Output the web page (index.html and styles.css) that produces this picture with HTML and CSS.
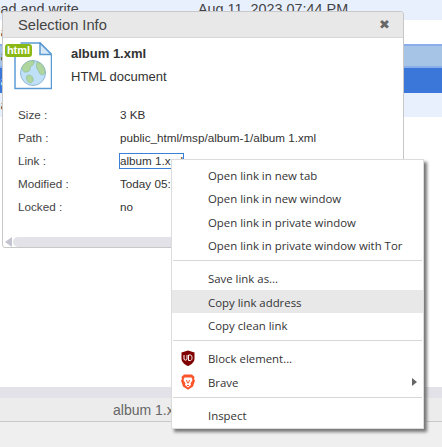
FILE: index.html
```html
<!DOCTYPE html>
<html lang="en">
<head>
<meta charset="UTF-8">
<meta name="viewport" content="width=device-width, initial-scale=1.0">
<title>Selection Info</title>
<link rel="stylesheet" href="styles.css">
</head>
<body>

<!-- file list behind the dialog -->
<div class="page">
    <div class="row row-light row-first"><span class="perm">Read and write</span><span class="date">Aug 11, 2023 07:44 PM</span></div>
    <div class="row row-plain"><span class="perm">Read and write</span></div>
    <div class="row row-hover"><span class="perm">Read and write</span></div>
    <div class="row row-selected"><span class="perm">Read and write</span></div>
    <div class="row row-light"><span class="perm">Read and write</span></div>
    <div class="page-empty"></div>
    <div class="page-scroll"></div>
    <div class="status"><span class="status-name">album 1.xml</span></div>
    <div class="page-foot"></div>
</div>

<!-- dialog -->
<div class="dialog">
    <div class="dialog-head">
        <span class="dialog-title">Selection Info</span>
        <span class="dialog-close">&#10006;</span>
    </div>
    <div class="dialog-body">
        <div class="file-head">
            <div class="file-icon">
                <svg width="47" height="48" viewBox="0 0 47 48">
                    <path d="M15.5 1H35L46.5 12.5V46.5H10V4" fill="#fff" stroke="#5b9bd5" stroke-width="1.5"/>
                    <path d="M35 1V12.5H46.5Z" fill="#d9e8f6" stroke="#5b9bd5" stroke-width="1.5"/>
                    <circle cx="28" cy="31" r="12.5" fill="#bfe0f6" stroke="#8fb8d8"/>
                    <path d="M17 25C20 20 25 18 29 19C30 22 27 24 25 25C26 28 24 30 21 30C19 31 17 28 17 25Z" fill="#b0d6a0" stroke="#7fb084" stroke-width=".5"/>
                    <path d="M23 33C27 33 29 36 28 39C26 42 23 41 22 38C21 36 21 34 23 33Z" fill="#b0d6a0" stroke="#7fb084" stroke-width=".5"/>
                    <path d="M32 20C37 21 40 25 40 31C38 34 35 33 34 30C33 27 30 26 32 20Z" fill="#b0d6a0" stroke="#7fb084" stroke-width=".5"/>
                </svg>
                <span class="file-badge">html</span>
            </div>
            <div class="file-text">
                <div class="file-name">album 1.xml</div>
                <div class="file-kind">HTML document</div>
            </div>
        </div>
        <div class="info">
            <div class="info-label">Size :</div><div>3 KB</div>
            <div class="info-label">Path :</div><div>public_html/msp/album-1/album 1.xml</div>
            <div class="info-label">Link :</div><div><span class="info-link">album 1.xml</span></div>
            <div class="info-label">Modified :</div><div>Today 05:21 PM</div>
            <div class="info-label">Locked :</div><div>no</div>
        </div>
    </div>
    <div class="dialog-scroll">
        <span class="scroll-arrow"></span>
        <span class="scroll-thumb"></span>
    </div>
</div>

<!-- right click menu -->
<div class="menu">
    <div class="menu-item">Open link in new tab</div>
    <div class="menu-item">Open link in new window</div>
    <div class="menu-item">Open link in private window</div>
    <div class="menu-item">Open link in private window with Tor</div>
    <div class="menu-sep"></div>
    <div class="menu-item">Save link as...</div>
    <div class="menu-item menu-active">Copy link address</div>
    <div class="menu-item">Copy clean link</div>
    <div class="menu-sep"></div>
    <div class="menu-item">
        <svg class="menu-icon" width="16" height="16" viewBox="0 0 16 16">
            <path d="M8 0.5L14.5 2.5V8.5C14.5 12 11.5 14.5 8 16C4.5 14.5 1.5 12 1.5 8.5V2.5Z" fill="#800000"/>
            <path d="M4 5V9C4 10.5 7 10.5 7 9V5M8.5 5V10.5H10.5C12.5 10.5 12.5 5 10.5 5Z" fill="none" stroke="#fff" stroke-width="1"/>
        </svg>
        Block element...
    </div>
    <div class="menu-item">
        <svg class="menu-icon" width="16" height="16" viewBox="0 0 16 16">
            <path d="M4 0.5H12L14.5 3L14 5L15 6.5L13 12.5L8 15.8L3 12.5L1 6.5L2 5L1.5 3Z" fill="#fb542b"/>
            <path d="M4.5 3.5H11.5L12.5 6L10.5 9.5L11 11L8 13.5L5 11L5.5 9.5L3.5 6Z" fill="#fff"/>
            <path d="M6.5 6L7.5 9H8.5L9.5 6M7 11.5H9" fill="none" stroke="#fb542b" stroke-width="1"/>
        </svg>
        Brave
        <span class="menu-arrow"></span>
    </div>
    <div class="menu-sep"></div>
    <div class="menu-item">Inspect</div>
</div>

</body>
</html>
```

FILE: styles.css
```css
/* base */
html, body {
    margin: 0;
    padding: 0;
    height: 100%;
    overflow: hidden;
}

body {
    position: relative;
    width: 442px;
    height: 447px;
    font-family: "Liberation Sans", Arial, sans-serif;
    font-size: 11.7px;
    color: #333;
    background-color: #fff;
}

/* page behind */
.page {
    display: flex;
    flex-direction: column;
    height: 447px;
}

.row {
    display: flex;
    align-items: center;
    height: 24px;
    flex-shrink: 0;
    font-size: 14.4px;
    white-space: nowrap;
}

.perm {
    width: 216px;
    margin-left: -18px;
    flex-shrink: 0;
    color: #444;
}

.date {
    color: #444;
}

.row-first {
    height: 20px;
    padding-bottom: 3px;
    box-sizing: border-box;
}

.row-light {
    background-color: #e9f0fd;
}

.row-plain {
    background-color: #fff;
}

.row-hover {
    background-color: #a6c5e6;
    border-top: 2px solid #8aaeeb;
    border-bottom: 2px solid #8aaeeb;
    box-sizing: border-box;
}

.row-selected {
    height: 25px;
    background-color: #3a77d8;
}

.row-selected .perm {
    color: #fff;
}

.page-empty {
    flex: 1;
}

.page-scroll {
    height: 11px;
    background-color: #e2e2e8;
}

.status {
    height: 24px;
    box-sizing: border-box;
    display: flex;
    align-items: center;
    background-color: #ececec;
    border-bottom: 1px solid #c8c8c8;
    font-size: 14px;
    color: #666;
    white-space: nowrap;
}

.status-name {
    margin-left: 113px;
}

.page-foot {
    height: 25px;
    background-color: #efefef;
}

/* dialog */
.dialog {
    position: absolute;
    left: 2px;
    top: 11px;
    width: 402px;
    height: 237px;
    box-sizing: border-box;
    display: flex;
    flex-direction: column;
    background-color: #fff;
    border: 1px solid #c8c8c8;
    border-radius: 3px;
    overflow: hidden;
}

.dialog-head {
    display: flex;
    align-items: center;
    justify-content: space-between;
    height: 26px;
    flex-shrink: 0;
    box-sizing: border-box;
    padding: 0 13px 0 15px;
    background-color: #e8e8e8;
    border-bottom: 1px solid #d8d8d8;
}

.dialog-title {
    font-size: 14.67px;
    color: #444;
}

.dialog-close {
    font-family: "DejaVu Sans", sans-serif;
    font-size: 13px;
    color: #666;
}

.dialog-body {
    flex: 1;
}

.file-head {
    display: flex;
    height: 65px;
}

.file-icon {
    position: relative;
    width: 68px;
    flex-shrink: 0;
    padding-top: 4px;
}

.file-icon svg {
    display: block;
    margin-left: 2px;
}

.file-badge {
    position: absolute;
    left: 2px;
    top: 6px;
    width: 27px;
    height: 13px;
    line-height: 12px;
    text-align: center;
    font-size: 11px;
    font-weight: bold;
    color: #fff;
    background-color: #8ab916;
    border-radius: 3px;
}

.file-text {
    padding-top: 4px;
    font-size: 13px;
}

.file-name {
    height: 23px;
    line-height: 23px;
    font-weight: bold;
    color: #333;
}

.file-kind {
    height: 23px;
    line-height: 23px;
}

.info {
    display: grid;
    grid-template-columns: 102px 1fr;
    grid-auto-rows: 23px;
    align-items: center;
    padding-left: 15px;
    white-space: nowrap;
}

.info-label {
    color: #444;
}

.info-link {
    display: block;
    width: 63px;
    margin-left: -1px;
    border: 1px solid #3a80d8;
    line-height: 14px;
    overflow: hidden;
}

.dialog-scroll {
    display: flex;
    align-items: center;
    height: 10px;
    flex-shrink: 0;
    padding-left: 2px;
}

.scroll-arrow {
    width: 0;
    height: 0;
    border-top: 5px solid transparent;
    border-bottom: 5px solid transparent;
    border-right: 7px solid #c4c4d0;
}

.scroll-thumb {
    flex: 1;
    height: 10px;
    margin-left: 1px;
    background-color: #e2e2e8;
    border-radius: 5px 0 0 5px;
}

/* context menu */
.menu {
    position: absolute;
    left: 171px;
    top: 159px;
    width: 253px;
    height: 270px;
    box-sizing: border-box;
    padding: 3px 0;
    background-color: #fff;
    border: 1px solid #dcdcdc;
    box-shadow: 3px 3px 3px #777;
    font-family: "Open Sans", sans-serif;
    font-size: 11.4px;
    color: #333;
}

.menu-item {
    position: relative;
    height: 23.33px;
    line-height: 26px;
    padding-left: 36px;
    white-space: nowrap;
}

.menu-active {
    background-color: #e8e8e8;
}

.menu-sep {
    height: 1px;
    margin: 4px 1px 5px;
    background-color: #d8d8d8;
}

.menu-icon {
    position: absolute;
    left: 8px;
    top: 4px;
}

.menu-arrow {
    position: absolute;
    right: 6px;
    top: 8px;
    border-top: 4px solid transparent;
    border-bottom: 4px solid transparent;
    border-left: 5px solid #666;
}
```
